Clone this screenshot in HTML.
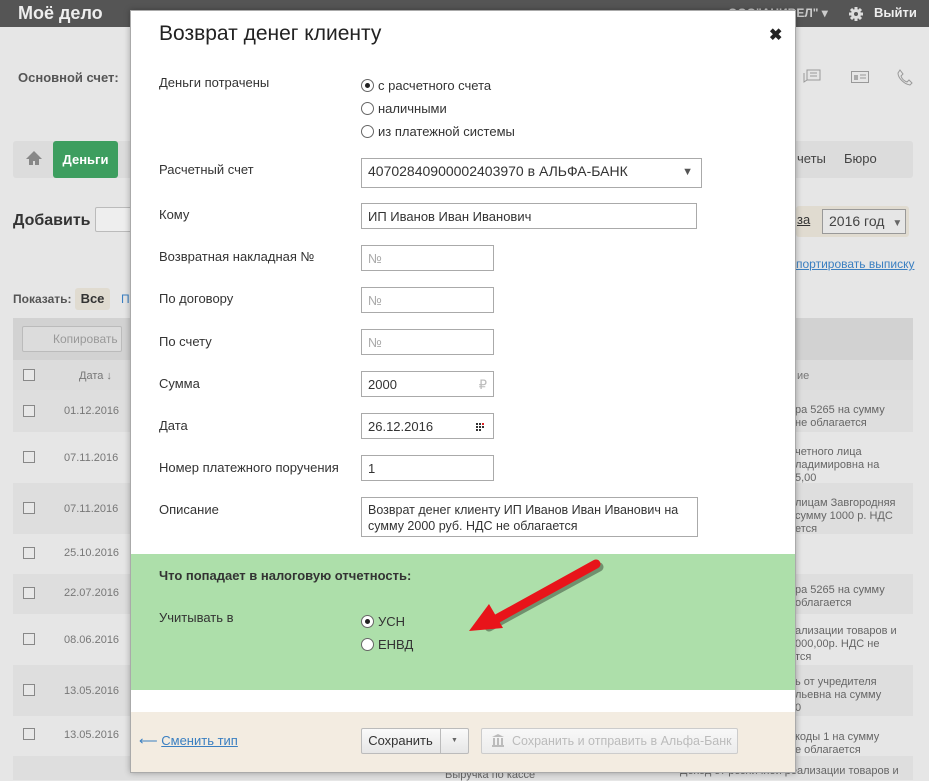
<!DOCTYPE html>
<html><head><meta charset="utf-8"><style>
*{box-sizing:border-box;margin:0;padding:0}
body{width:929px;height:780px;overflow:hidden;background:#e6e6e6;font-family:"Liberation Sans",Arial,sans-serif;position:relative;font-size:13px;color:#333}
.abs{position:absolute;white-space:nowrap}
.top{left:0;top:0;width:929px;height:27px;background:#555}
.row{left:13px;width:900px}
.cb{width:12px;height:12px;border:1px solid #888;background:#e8e8e8;position:absolute;left:23px}
.dt{position:absolute;left:64px;font-size:11px;color:#777}
.rt{position:absolute;left:795px;font-size:11px;color:#666;line-height:13px;white-space:nowrap}
.modal{left:130px;top:10px;width:666px;height:763px;background:#fff;border:1px solid #aaa;box-shadow:0 0 6px rgba(0,0,0,.3)}
.lbl{position:absolute;left:28px;font-size:13px;color:#333;white-space:nowrap}
.inp{position:absolute;left:230px;height:26px;border:1px solid #aaa;font-size:13px;padding:5px 6px;color:#333;background:#fff;white-space:nowrap}
.ph{color:#aaa}
.rad{position:absolute;width:13px;height:13px;border:1px solid #666;border-radius:50%;background:#fff}
.rad.on:after{content:"";position:absolute;left:3px;top:3px;width:5px;height:5px;border-radius:50%;background:#222}
.rl{position:absolute;font-size:13px;color:#333;white-space:nowrap}
</style></head><body>
<div class="abs top"></div>
<div class="abs" style="left:18px;top:3px;color:#eee;font-size:18px;font-weight:bold">Моё дело</div>
<div class="abs" style="left:728px;top:6px;color:#ccc;font-size:12px;font-weight:bold">ООО"АНИВЕЛ" ▾</div>
<svg class="abs" style="left:848px;top:6px" width="16" height="16" viewBox="0 0 16 16"><g stroke="#ddd" stroke-width="3"><line x1="8" y1="1" x2="8" y2="15"/><line x1="1" y1="8" x2="15" y2="8"/><line x1="3" y1="3" x2="13" y2="13"/><line x1="13" y1="3" x2="3" y2="13"/></g><circle cx="8" cy="8" r="5" fill="#ddd"/><circle cx="8" cy="8" r="2" fill="#555"/></svg>
<div class="abs" style="left:874px;top:5px;color:#eee;font-size:13px;font-weight:bold">Выйти</div>
<div class="abs" style="left:18px;top:70px;font-size:13px;font-weight:bold;color:#555">Основной счет:</div>
<svg class="abs" style="left:803px;top:69px" width="18" height="16"><rect x="4" y="1" width="13" height="10" fill="none" stroke="#999"/><path d="M1 4v9l3-2" fill="none" stroke="#999"/><line x1="7" y1="4" x2="14" y2="4" stroke="#999"/><line x1="7" y1="7" x2="14" y2="7" stroke="#999"/></svg>
<svg class="abs" style="left:851px;top:71px" width="18" height="12"><rect x=".5" y=".5" width="17" height="11" fill="none" stroke="#999"/><rect x="3" y="4" width="4" height="5" fill="#aaa"/><line x1="9" y1="4" x2="15" y2="4" stroke="#999"/><line x1="9" y1="7" x2="15" y2="7" stroke="#999"/></svg>
<svg class="abs" style="left:897px;top:69px" width="16" height="17"><path d="M3 1l3 4-2 2c1 3 3 5 6 6l2-2 3 3-2 2C7 15 1 9 1 4z" fill="none" stroke="#999"/></svg>
<div class="abs" style="left:13px;top:141px;width:900px;height:37px;background:#dcdcdc;border-radius:3px"></div>
<svg class="abs" style="left:25px;top:150px" width="18" height="16"><path d="M9 1L1 9h3v6h4v-4h2v4h4V9h3z" fill="#888"/></svg>
<div class="abs" style="left:53px;top:141px;width:65px;height:37px;background:#3d9e5f;border-radius:3px;color:#fff;font-weight:bold;font-size:13px;line-height:37px;text-align:center">Деньги</div>
<div class="abs" style="left:797px;top:151px;font-size:13px;color:#444">четы</div>
<div class="abs" style="left:844px;top:151px;font-size:13px;color:#444">Бюро</div>
<div class="abs" style="left:13px;top:212px;font-size:16px;font-weight:bold;color:#333">Добавить</div>
<div class="abs" style="left:95px;top:207px;width:40px;height:25px;background:#eee;border:1px solid #bbb;border-radius:2px"></div>
<div class="abs" style="left:796px;top:206px;width:113px;height:31px;background:#e0dbd0;border-radius:3px"></div>
<div class="abs" style="left:797px;top:212px;font-size:13px;color:#333;text-decoration:underline">за</div>
<div class="abs" style="left:822px;top:209px;width:84px;height:25px;border:1px solid #999;background:#e6e6e6;font-size:14px;padding:3px 6px;color:#444">2016 год <span style="font-size:10px;color:#666;margin-left:4px">▼</span></div>
<div class="abs" style="left:796px;top:257px;font-size:12px;color:#3a7fc1;text-decoration:underline">портировать выписку</div>
<div class="abs" style="left:13px;top:292px;font-size:12px;font-weight:bold;color:#555">Показать:</div>
<div class="abs" style="left:75px;top:288px;width:35px;height:22px;background:#e0dbd0;border-radius:3px;font-weight:bold;font-size:13px;line-height:22px;text-align:center">Все</div>
<div class="abs" style="left:121px;top:292px;font-size:12px;color:#3a7fc1">П</div>
<div class="abs row" style="top:318px;height:42px;background:#d2d2d2"></div>
<div class="abs" style="left:22px;top:326px;width:100px;height:26px;border:1px solid #bbb;background:#dcdcdc;border-radius:2px;font-size:12px;color:#999;padding:5px 0 0 30px">Копировать</div>
<div class="abs row" style="top:360px;height:30px;background:#dcdcdc"></div>
<div class="cb" style="top:369px"></div>
<div class="abs" style="left:79px;top:370px;font-size:11px;color:#777">Дата ↓</div>
<div class="abs" style="left:797px;top:370px;font-size:11px;color:#777">ие</div>
<div class="abs row" style="top:390px;height:42px;background:#dedede"></div>
<div class="abs row" style="top:483px;height:51px;background:#dedede"></div>
<div class="abs row" style="top:574px;height:40px;background:#dedede"></div>
<div class="abs row" style="top:665px;height:51px;background:#dedede"></div>
<div class="abs row" style="top:756px;height:24px;background:#dedede"></div>
<div class="cb" style="top:405px"></div><div class="dt" style="top:405px">01.12.2016</div>
<div class="cb" style="top:451px"></div><div class="dt" style="top:452px">07.11.2016</div>
<div class="cb" style="top:502px"></div><div class="dt" style="top:503px">07.11.2016</div>
<div class="cb" style="top:547px"></div><div class="dt" style="top:547px">25.10.2016</div>
<div class="cb" style="top:587px"></div><div class="dt" style="top:587px">22.07.2016</div>
<div class="cb" style="top:633px"></div><div class="dt" style="top:634px">08.06.2016</div>
<div class="cb" style="top:684px"></div><div class="dt" style="top:685px">13.05.2016</div>
<div class="cb" style="top:728px"></div><div class="dt" style="top:729px">13.05.2016</div>
<div class="rt" style="top:404px">ра 5265 на сумму<br>не облагается</div>
<div class="rt" style="top:446px">четного лица<br>ладимировна на<br>5,00</div>
<div class="rt" style="top:497px">лицам Завгородняя<br>сумму 1000 р. НДС<br>ется</div>
<div class="rt" style="top:584px">ра 5265 на сумму<br>облагается</div>
<div class="rt" style="top:625px">ализации товаров и<br>000,00р. НДС не<br>тся</div>
<div class="rt" style="top:676px">ь от учредителя<br>льевна на сумму<br>0</div>
<div class="rt" style="top:731px">коды 1 на сумму<br>е облагается</div>
<div class="rt" style="top:765px;left:680px">Доход от розничной реализации товаров и</div>
<div class="abs" style="left:445px;top:769px;font-size:11px;color:#666">Выручка по кассе</div>

<div class="abs modal">
 <div class="abs" style="left:28px;top:11px;font-size:21px;color:#222">Возврат денег клиенту</div>
 <div class="abs" style="left:638px;top:14px;font-size:16px;font-weight:bold;color:#222">✖</div>
 <div class="lbl" style="top:64px">Деньги потрачены</div>
 <div class="rad on" style="left:230px;top:68px"></div><div class="rl" style="left:247px;top:67px">с расчетного счета</div>
 <div class="rad" style="left:230px;top:91px"></div><div class="rl" style="left:247px;top:90px">наличными</div>
 <div class="rad" style="left:230px;top:114px"></div><div class="rl" style="left:247px;top:113px">из платежной системы</div>
 <div class="lbl" style="top:151px">Расчетный счет</div>
 <div class="inp" style="top:147px;width:341px;height:30px;font-size:14px;padding:4px 6px">40702840900002403970 в АЛЬФА-БАНК<span class="abs" style="right:8px;top:7px;font-size:11px;color:#555">▼</span></div>
 <div class="lbl" style="top:196px">Кому</div>
 <div class="inp" style="top:192px;width:336px">ИП Иванов Иван Иванович</div>
 <div class="lbl" style="top:238px">Возвратная накладная №</div>
 <div class="inp ph" style="top:234px;width:133px">№</div>
 <div class="lbl" style="top:280px">По договору</div>
 <div class="inp ph" style="top:276px;width:133px">№</div>
 <div class="lbl" style="top:323px">По счету</div>
 <div class="inp ph" style="top:318px;width:133px">№</div>
 <div class="lbl" style="top:365px">Сумма</div>
 <div class="inp" style="top:360px;width:133px">2000<span class="abs" style="right:6px;top:5px;color:#bbb">₽</span></div>
 <div class="lbl" style="top:407px">Дата</div>
 <div class="inp" style="top:402px;width:133px">26.12.2016<svg class="abs" style="right:7px;top:9px" width="10" height="8"><g fill="#333"><rect x="0" y="0" width="2" height="2"/><rect x="3" y="0" width="2" height="2"/><rect x="6" y="0" width="2" height="2" fill="#d22"/><rect x="0" y="3" width="2" height="2"/><rect x="3" y="3" width="2" height="2"/><rect x="6" y="3" width="2" height="2"/><rect x="0" y="6" width="2" height="2"/><rect x="3" y="6" width="2" height="2"/></g></svg></div>
 <div class="lbl" style="top:449px">Номер платежного поручения</div>
 <div class="inp" style="top:444px;width:133px">1</div>
 <div class="lbl" style="top:491px">Описание</div>
 <div class="inp" style="top:486px;width:337px;height:40px;padding:4px 6px;line-height:16px;font-size:12.5px;white-space:normal">Возврат денег клиенту ИП Иванов Иван Иванович на сумму 2000 руб. НДС не облагается</div>
 <div class="abs" style="left:0;top:543px;width:664px;height:136px;background:#addfaa"></div>
 <div class="lbl" style="top:557px;font-weight:bold">Что попадает в налоговую отчетность:</div>
 <div class="lbl" style="top:599px">Учитывать в</div>
 <div class="rad on" style="left:230px;top:604px"></div><div class="rl" style="left:247px;top:603px">УСН</div>
 <div class="rad" style="left:230px;top:627px"></div><div class="rl" style="left:247px;top:626px">ЕНВД</div>
 <svg class="abs" style="left:330px;top:545px" width="150" height="80"><path d="M135 8L25 68" stroke="rgba(0,0,0,.35)" stroke-width="9" stroke-linecap="round" transform="translate(3,3)"/><path d="M135 8L30 66" stroke="#e8141a" stroke-width="9" stroke-linecap="round"/><path d="M8 75L28 48L42 72Z" fill="#e8141a"/></svg>
 <div class="abs" style="left:0;top:701px;width:664px;height:60px;background:#f3ece1"></div>
 <div class="abs" style="left:8px;top:722px;font-size:13px;color:#3a7fc1">⟵ <span style="text-decoration:underline">Сменить тип</span></div>
 <div class="abs" style="left:230px;top:717px;width:108px;height:26px;border:1px solid #bbb;border-radius:2px;background:linear-gradient(#fafafa,#e6e6e6)"></div>
 <div class="abs" style="left:230px;top:717px;width:80px;height:26px;border-right:1px solid #bbb;font-size:13px;color:#333;line-height:25px;text-align:center">Сохранить</div>
 <div class="abs" style="left:320px;top:726px;font-size:7px;color:#666">▼</div>
 <div class="abs" style="left:350px;top:717px;width:257px;height:26px;border:1px solid #ccc;border-radius:2px;background:linear-gradient(#f8f8f8,#ececec);font-size:12.5px;color:#bbb;line-height:25px;padding-left:30px">Сохранить и отправить в Альфа-Банк</div>
 <svg class="abs" style="left:360px;top:722px" width="14" height="15"><path d="M7 1L1 4h12z" fill="#bbb"/><rect x="2" y="5" width="2" height="7" fill="#bbb"/><rect x="6" y="5" width="2" height="7" fill="#bbb"/><rect x="10" y="5" width="2" height="7" fill="#bbb"/><rect x="1" y="12" width="12" height="2" fill="#bbb"/></svg>
</div>
</body></html>
